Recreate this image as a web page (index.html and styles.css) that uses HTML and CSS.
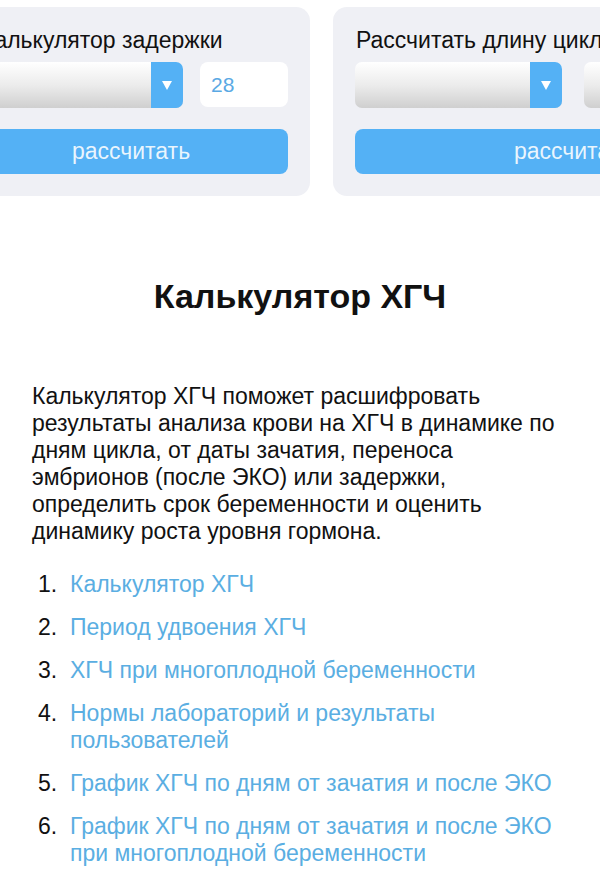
FILE: index.html
```html
<!DOCTYPE html>
<html lang="ru">
<head>
  <meta charset="UTF-8">
  <meta name="viewport" content="width=device-width, initial-scale=1.0">
  <title>Калькулятор ХГЧ</title>
  <link rel="stylesheet" href="styles.css">
</head>

<body>
  <div class="slider">
    <div class="slider-track">

      <div class="card card-delay">
        <div class="card-title">Калькулятор задержки</div>
        <div class="card-row">
          <div class="select">
            <span class="select-arrow"></span>
          </div>
          <div class="field">28</div>
        </div>
        <button class="calc-btn">рассчитать</button>
      </div>

      <div class="card card-cycle">
        <div class="card-title">Рассчитать длину цикла</div>
        <div class="card-row">
          <div class="select">
            <span class="select-arrow"></span>
          </div>
          <div class="select">
            <span class="select-arrow"></span>
          </div>
        </div>
        <button class="calc-btn">рассчитать</button>
      </div>

    </div>
  </div>

  <div class="content">
    <h1>Калькулятор ХГЧ</h1>

    <p class="intro">
      Калькулятор ХГЧ поможет расшифровать результаты анализа крови на ХГЧ в динамике по дням цикла, от даты зачатия, переноса эмбрионов (после ЭКО) или задержки, определить срок беременности и оценить динамику роста уровня гормона.
    </p>

    <ol class="toc">
      <li><a href="#calc">Калькулятор ХГЧ</a></li>
      <li><a href="#doubling">Период удвоения ХГЧ</a></li>
      <li><a href="#multiple">ХГЧ при многоплодной беременности</a></li>
      <li><a href="#norms">Нормы лабораторий и результаты пользователей</a></li>
      <li><a href="#chart">График ХГЧ по дням от зачатия и после ЭКО</a></li>
      <li><a href="#chart-multiple">График ХГЧ по дням от зачатия и после ЭКО при многоплодной беременности</a></li>
    </ol>
  </div>
</body>
</html>
```

FILE: styles.css
```css
:root {
  --card-bg: #eff0f5;
  --blue: #54b1f5;
  --link: #5aaee2;
  --text: #111111;
}

* {
  box-sizing: border-box;
  margin: 0;
  padding: 0;
}

body {
  font-family: "Liberation Sans", Arial, Helvetica, sans-serif;
  color: var(--text);
  background: #ffffff;
  width: 600px;
  overflow: hidden;
}

/* top calculators carousel, scrolled a bit */
.slider {
  overflow: hidden;
  width: 100%;
}

.slider-track {
  display: flex;
  gap: 23px;
  margin-left: -48px;
  padding-top: 7px;
}

.card {
  flex: none;
  background: var(--card-bg);
  border-radius: 14px;
  padding: 20px 22px 22px;
}

.card-delay {
  width: 358px;
}

.card-cycle {
  width: 480px;
}

.card-title {
  font-size: 23px;
  line-height: 26px;
  margin-bottom: 9px;
  padding-left: 7px;
  white-space: nowrap;
}

.card-cycle .card-title {
  padding-left: 1px;
}

.card-row {
  display: flex;
  gap: 17px;
}

.card-cycle .card-row {
  gap: 22px;
}

.select {
  position: relative;
  flex: 1;
  height: 46px;
  border-radius: 7px;
  background: linear-gradient(to bottom, #ffffff 0%, #ececec 50%, #cfcfcf 100%);
  overflow: hidden;
}

.select-arrow {
  position: absolute;
  top: 0;
  right: 0;
  width: 32px;
  height: 100%;
  background: var(--blue);
}

.select-arrow::after {
  content: '';
  position: absolute;
  left: 50%;
  top: 50%;
  margin: -4px 0 0 -5px;
  border-left: 5px solid transparent;
  border-right: 5px solid transparent;
  border-top: 9px solid #ffffff;
}

.field {
  flex: none;
  width: 88px;
  height: 45px;
  border-radius: 8px;
  background: #ffffff;
  color: #5aa9e4;
  font-size: 21px;
  line-height: 45px;
  padding-left: 11px;
}

.calc-btn {
  display: block;
  width: 100%;
  height: 45px;
  margin-top: 21px;
  border: none;
  border-radius: 8px;
  background: var(--blue);
  color: rgba(255, 255, 255, 0.88);
  font-family: inherit;
  font-size: 23px;
}

/* article */
.content {
  padding: 0 40px 0 32px;
}

h1 {
  text-align: center;
  font-size: 34px;
  line-height: 38px;
  font-weight: 700;
  margin-top: 81px;
  margin-right: -10px;
  margin-left: -2px;
}

.intro {
  font-size: 23px;
  line-height: 27px;
  margin-top: 68px;
}

.toc {
  list-style: none;
  counter-reset: toc;
  margin-top: 26px;
  margin-left: 6px;
  font-size: 23px;
  line-height: 27px;
}

.toc li {
  counter-increment: toc;
  display: grid;
  grid-template-columns: 32px 1fr;
  margin-bottom: 16px;
}

.toc li::before {
  content: counter(toc) ".";
}

.toc a {
  color: var(--link);
  text-decoration: none;
}
```
